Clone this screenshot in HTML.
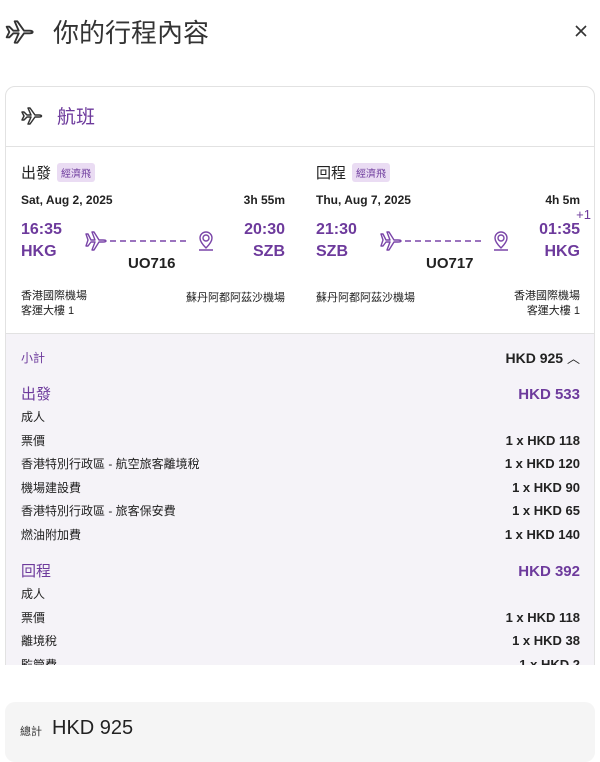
<!DOCTYPE html>
<html><head><meta charset="utf-8"><style>
*{margin:0;padding:0;box-sizing:border-box}
body{width:600px;height:751px;overflow:hidden;background:#fff;font-family:"Liberation Sans","Noto Sans CJK TC",sans-serif;color:#222;position:relative}
.a{position:absolute;white-space:nowrap}
.p{color:#6d3a9c}
.b{font-weight:bold}
.card{position:absolute;left:5px;top:86px;width:590px;height:600px;border:1px solid #e2e2e2;border-radius:10px;overflow:hidden}
.grey{position:absolute;left:0;top:246px;width:100%;height:400px;background:#f5f3f8;border-top:1px solid #e2e2e2}
.badge{position:absolute;background:#eadcf3;color:#6d3a9c;font-size:10px;padding:2px 4px;border-radius:3px}
.r{text-align:right}
.row{position:absolute;left:15px;right:14px;font-size:12px;display:flex;justify-content:space-between;line-height:16px}
.row span:last-child{font-weight:bold;font-size:13px}
</style></head><body>
<svg class="a" style="left:3px;top:16px" width="34" height="32" viewBox="0 0 24 24" fill="none" stroke="#333" stroke-width="1.4" stroke-linejoin="round"><path d="M2 8l2 4-2 4h2l3-3h4l-3 7h2l5-7h4c1.5 0 2.5-.5 2.5-1s-1-1-2.5-1h-4L10 4H8l3 7H7L4 8z"/></svg>
<div class="a" style="left:53px;top:13px;font-size:26px;color:#333">你的行程內容</div>
<svg class="a" style="left:575px;top:25px" width="12" height="12" viewBox="0 0 12 12" stroke="#333" stroke-width="1.6"><path d="M1 1l10 10M11 1L1 11"/></svg>
<div class="card">
<svg class="a" style="left:13px;top:17px" width="26" height="24" viewBox="0 0 24 24" fill="none" stroke="#333" stroke-width="1.5" stroke-linejoin="round"><path d="M2 8l2 4-2 4h2l3-3h4l-3 7h2l5-7h4c1.5 0 2.5-.5 2.5-1s-1-1-2.5-1h-4L10 4H8l3 7H7L4 8z"/></svg>
<div class="a p" style="left:51px;top:15px;font-size:19px">航班</div>
<div class="a" style="left:0;top:59px;width:100%;border-top:1px solid #e2e2e2"></div>

<div class="a" style="left:15px;top:75px;font-size:15px">出發</div>
<div class="badge" style="left:51px;top:76px">經濟飛</div>
<div class="a b" style="left:15px;top:106px;font-size:12px">Sat, Aug 2, 2025</div>
<div class="a b r" style="right:309px;top:106px;font-size:12px">3h 55m</div>
<div class="a b p" style="left:15px;top:134px;font-size:16px">16:35</div>
<div class="a b p" style="left:15px;top:156px;font-size:16px">HKG</div>
<div class="a b p" style="right:309px;top:134px;font-size:16px">20:30</div>
<div class="a b p" style="right:309px;top:156px;font-size:16px">SZB</div>
<div class="a b" style="left:122px;top:168px;font-size:15px">UO716</div>
<div class="a" style="left:15px;top:202px;font-size:11px;line-height:15px">香港國際機場<br>客運大樓 1</div>
<div class="a r" style="right:309px;top:202px;font-size:11px">蘇丹阿都阿茲沙機場</div>

<div class="a" style="left:310px;top:75px;font-size:15px">回程</div>
<div class="badge" style="left:346px;top:76px">經濟飛</div>
<div class="a b" style="left:310px;top:106px;font-size:12px">Thu, Aug 7, 2025</div>
<div class="a b r" style="right:14px;top:106px;font-size:12px">4h 5m</div>
<div class="a p" style="right:3px;top:120px;font-size:13px">+1</div>
<div class="a b p" style="left:310px;top:134px;font-size:16px">21:30</div>
<div class="a b p" style="left:310px;top:156px;font-size:16px">SZB</div>
<div class="a b p" style="right:14px;top:134px;font-size:16px">01:35</div>
<div class="a b p" style="right:14px;top:156px;font-size:16px">HKG</div>
<div class="a b" style="left:420px;top:168px;font-size:15px">UO717</div>
<div class="a" style="left:310px;top:202px;font-size:11px">蘇丹阿都阿茲沙機場</div>
<div class="a r" style="right:14px;top:202px;font-size:11px;line-height:15px">香港國際機場<br>客運大樓 1</div>

<svg class="a" style="left:78px;top:141px" width="140" height="26" viewBox="0 0 140 26" fill="none" stroke="#7a45a8" stroke-width="1.4" stroke-linejoin="round"><path d="M2 6l2 6-2 6h2l3-4h4l-3 8h2l5-8h4c2 0 3-.6 3-1s-1-1-3-1h-4L10 4H8l3 8H7L4 6z"/><path d="M26 13h80" stroke-dasharray="6 4"/><circle cx="122" cy="10" r="3"/><path d="M122 20c-4-4-6-7-6-10a6 6 0 0112 0c0 3-2 6-6 10zM115 22h14"/></svg>
<svg class="a" style="left:373px;top:141px" width="140" height="26" viewBox="0 0 140 26" fill="none" stroke="#7a45a8" stroke-width="1.4" stroke-linejoin="round"><path d="M2 6l2 6-2 6h2l3-4h4l-3 8h2l5-8h4c2 0 3-.6 3-1s-1-1-3-1h-4L10 4H8l3 8H7L4 6z"/><path d="M26 13h80" stroke-dasharray="6 4"/><circle cx="122" cy="10" r="3"/><path d="M122 20c-4-4-6-7-6-10a6 6 0 0112 0c0 3-2 6-6 10zM115 22h14"/></svg>

<div class="grey">
<div class="row" style="top:16px"><span class="p" style="font-weight:normal">小計</span><span style="font-size:14px">HKD 925 <span style="font-weight:normal">︿</span></span></div>
<div class="row" style="top:53px;font-size:15px"><span class="p" style="font-weight:normal">出發</span><span class="p" style="font-size:15px">HKD 533</span></div>
<div class="row" style="top:75px"><span>成人</span><span></span></div>
<div class="row" style="top:99px"><span>票價</span><span>1 x HKD 118</span></div>
<div class="row" style="top:122px"><span>香港特別行政區 - 航空旅客離境稅</span><span>1 x HKD 120</span></div>
<div class="row" style="top:146px"><span>機場建設費</span><span>1 x HKD 90</span></div>
<div class="row" style="top:169px"><span>香港特別行政區 - 旅客保安費</span><span>1 x HKD 65</span></div>
<div class="row" style="top:193px"><span>燃油附加費</span><span>1 x HKD 140</span></div>
<div class="row" style="top:230px;font-size:15px"><span class="p" style="font-weight:normal">回程</span><span class="p" style="font-size:15px">HKD 392</span></div>
<div class="row" style="top:252px"><span>成人</span><span></span></div>
<div class="row" style="top:276px"><span>票價</span><span>1 x HKD 118</span></div>
<div class="row" style="top:299px"><span>離境稅</span><span>1 x HKD 38</span></div>
<div class="row" style="top:323px"><span>監管費</span><span>1 x HKD 2</span></div>
</div>
</div>
<div class="a" style="left:0;top:665px;width:600px;height:37px;background:#fff"></div>
<div class="a" style="left:5px;top:702px;width:590px;height:60px;background:#f5f5f5;border-radius:10px"></div>
<div class="a" style="left:20px;top:723px;font-size:11px;color:#333">總計</div>
<div class="a" style="left:52px;top:717px;font-size:20px;color:#222">HKD 925</div>
</body></html>
